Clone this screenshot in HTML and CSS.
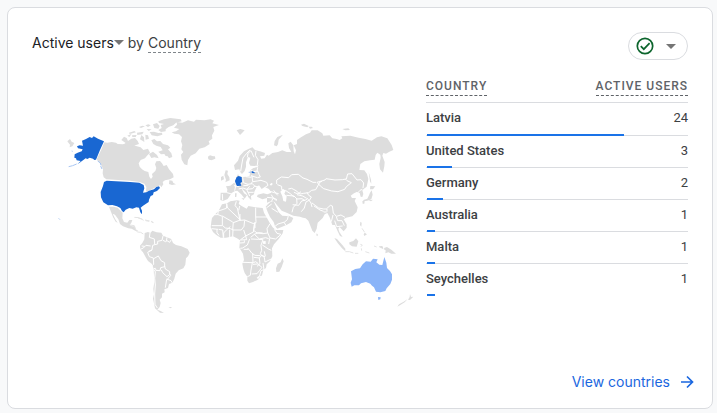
FILE: index.html
```html
<!DOCTYPE html>
<html lang="en">
<head>
<meta charset="utf-8">
<title>Active users by Country</title>
<link rel="stylesheet" href="styles.css">
</head>
<body>
<main class="card">
  <header class="card-header">
    <h1 class="title">
      <button class="metric" type="button">Active users<svg class="caret" viewBox="0 0 10 5" aria-hidden="true"><path d="M0 0h10L5 5z"/></svg></button>
      <span>by</span>
      <span class="dimension">Country</span>
    </h1>
    <button class="status" type="button" aria-label="Data quality">
      <svg class="check" viewBox="0 0 18 18" aria-hidden="true"><circle cx="9" cy="9" r="7.7"/><path d="M4.8 9.2l3 3 5.8-6"/></svg>
      <svg class="caret" viewBox="0 0 10 5" aria-hidden="true"><path d="M0 0h10L5 5z"/></svg>
    </button>
  </header>
  <div class="content">
    <svg class="map" viewBox="32 68 386 252" role="img" aria-label="World map of active users">
      <!-- North America -->
      <g transform="translate(50 110) scale(.33333)">
        <path class="land" d="M163 97L172 98 185 96 198 98 203 102 219 103 233 99 240 104 258 108 272 112 280 120 294 116 300 128 291 137 285 145 272 150 266 160 269 170 276 178 284 183 295 186 298 200 303 207 308 200 306 192 316 183 319 174 315 163 319 154 330 153 336 160 341 168 350 165 357 178 369 192 371 202 360 208 345 211 338 216 340 223 334 232 330 226 314 233 300 241 288 245 289 231 283 221 269 216 240 212 169 208 161 202 158 190 159 178 154 165 147 157 140 148 153 121z"/>
        <path class="land" d="M358 211l9 1 3 7 8 4-12 2-9-3zM52 94l8-7 5 8 8 4-6 10-8 3 1-8zM177 290l13 0 13 3 7 8 8 7-1 17 5 11 10 2 6-8 9 0-3 8-5 7 7 4 8 0 3 9 8 5-8 0-12-7-10-1-16-6-9-7-5-14-10-14-7-3 8 17 7 10-6-3-8-14z"/>
        <path class="land thin" d="M253 322l14 1 14 8M287 332l10 2M303 334l5 1"/>
        <path class="active" d="M96 92L108 87 119 81 126 84 131 79 144 86 162 94 150 120 138 149 133 150 129 146 119 143 112 147 107 145 91 157 82 163 92 153 80 151 78 145 73 143 74 133 83 128 95 124 98 118 84 115 81 109 89 106 99 107z"/>
        <path class="faint" d="M80 162l-12 5-12 3M143 153l8 6 2 7M152 168l4 9M65 123l3 1M26 325l4 4"/>
        <path class="active" d="M170 212L240 216 268 218 281 225 283 235 279 248 289 247 297 242 312 238 319 231 327 229 330 234 321 243 311 247 309 255 302 258 297 269 296 276 278 288 272 293 276 302 276 313 271 307 267 293 259 292 248 296 238 294 227 299 221 307 216 303 211 294 201 289 187 285 174 286 160 277 153 262 152 246 159 228 162 216z"/>
      </g>
      <!-- Arctic islands and Greenland -->
      <g transform="translate(120 110) scale(.33333)">
        <path class="land" d="M4 90L12 80 20 84 24 93 34 86 45 84 53 93 57 102 46 106 39 111 22 108 10 105 17 99zM94 91L103 87 111 94 121 93 129 102 144 106 151 113 144 118 154 130 157 141 147 145 143 139 137 138 133 132 123 133 115 125 128 121 122 111 109 107 100 102zM115 34L132 28 151 24 182 28 185 34 168 38 160 46 146 51 137 58 137 64 123 66 115 60 125 54 122 45 132 42 117 39zM89 66l13-1 13 4 11-1 1 6-15 5-17-3zM99 43l12-4 8 9-4 8-12-2zM27 68l16-5 5 4-19 5zM51 68l20-3-4 8-15 2zM22 77l13-6-7 10zM36 76l14-1-3 6-10 0zM64 75l8 7 1 14-13-8zM76 74l8 2 3 10-10 3zM76 46l9-3 7 3-8 5zM57 51l10-4 8 2-12 5zM80 57l15 1-9 5zM87 132l12-7 12 10 5 10-13-3-9 2z"/>
        <path class="land" d="M155 67L168 64 178 57 162 53 171 44 170 36 187 38 204 31 222 35 228 29 253 31 272 28 282 32 277 40 297 45 280 51 283 62 276 76 277 86 266 94 269 102 254 112 238 116 227 130 212 137 204 150 202 166 193 163 185 149 183 134 190 126 184 118 187 105 183 94 186 81 177 73 163 71zM264 141l7-3 5 3 9-2 1 7-12 5-9-3z"/>
      </g>
      <!-- South America -->
      <g transform="translate(120 210) scale(.33333)">
        <path class="land" d="M74 69L84 66 91 69 97 62 110 67 124 68 129 77 141 82 154 87 159 99 168 105 184 109 203 117 209 128 204 139 198 145 196 164 190 175 176 181 167 191 163 206 157 218 147 222 144 234 133 238 134 247 126 251 126 262 119 269 122 279 119 291 112 299 122 303 132 309 120 308 105 295 102 280 99 266 102 253 100 236 103 216 101 176 96 162 84 153 78 143 69 127 61 118 60 107 67 99 73 88zM145 292l11-1-4 4z"/>
        <path class="land thin" d="M29 45l14 2 4 12 5 7 10 1 8 5M55 25l12 2M75 30l14 3M95 37l6 1"/>
        <path class="border" d="M90 69l-2 13 15 5 1 17-6 2-2 14-10 4M104 104l9-2 0-8 13-3 3-13M129 91l8 4 4-3 8 5 5-8M141 82l-2 11M61 118l9-4 8-8 14 2M65 108l9 1M96 120l-13 7 5 13 12 4 1 19-4 4M101 146l14-8 8 14 11 6 0 12-12 3-2 9-12-1-2-6-4 1M134 168l2 9 13 8 0 9-8 6-13-12-4-8M149 191l3 5-12 15M140 207l13 5 4 7M140 208l-4 25M103 179l3 7-2 19 2 20-2 27 1 31 7 11"/>
      </g>
      <!-- Europe and Asia -->
      <g transform="translate(200 120) scale(.33333)">
        <path class="land" d="M165 90L180 94 195 99 193 107 180 109 184 116 194 115 201 104 206 107 217 99 234 96 247 91 260 96 274 96 267 84 265 70 272 65 280 76 281 94 285 103 288 91 281 76 291 72 291 60 303 52 318 43 330 38 335 31 353 31 367 40 370 47 389 46 397 55 410 57 419 60 427 55 424 49 451 47 476 53 496 57 515 62 531 52 544 49 562 55 575 75 580 90 568 95 558 101 550 99 547 107 554 126 553 139 549 158 540 148 538 132 542 113 541 104 532 98 527 105 524 119 510 121 493 124 481 132 478 150 493 151 501 162 505 177 500 200 492 206 487 211 490 222 487 231 482 230 479 219 470 216 462 220 452 227 456 234 468 234 464 243 473 262 470 276 457 289 438 293 431 298 440 313 440 323 431 334 425 328 419 321 415 326 418 336 428 351 420 348 413 334 405 315 397 315 389 292 382 279 374 283 368 294 353 308 350 326 344 339 337 332 325 302 317 295 309 293 300 290 280 287 260 278 245 272 229 253 224 246 212 244 201 248 201 234 187 238 171 230 173 224 190 220 202 223 214 218 207 207 194 201 185 207 177 196 170 201 163 215 162 223 153 228 154 241 145 232 139 219 124 204 132 220 141 226 134 236 125 224 112 212 105 213 95 219 83 237 69 243 61 240 62 218 81 218 82 208 78 199 91 197 104 187 108 176 114 162 119 172 138 170 149 167 151 151 160 144 173 141 176 136 163 138 151 137 147 129 151 113 144 111 138 127 138 140 134 153 126 162 121 157 118 148 105 150 102 136 114 122 119 108 132 94 145 87 157 82z"/>
        <path class="cut" d="M241 215l8-8 8 5-4 9 7 8-2 16-8-2-3-14zM209 193l7-5 2 5-5 4z"/>
        <path class="land" d="M73 165l4-14 7 1-2 10 6 10 1 9-13 6 2-8zM63 171l7-4 2 11-9 4zM110 31l11-4 13 4-10 10-4 4zM222 76l2-13 8-12 17-7-13 15-2 14-4 6zM24 110l6-4 14 4-3 7-12 2zM136 242l6 3M124 235l9 0-2 5zM105 220l5 0-1 11-4 0zM303 14l9-3 14 7-4 4-15-4zM326 20l9 0 4 4-9 2zM427 27l18-2 5 5-14 1zM506 156l3 10 4 13 1 12-4-7zM511 198l15 1-7 9-9 0zM515 211l3 13-4 14-12 4-12 2 0-4 12-4 5-10 3-8zM487 243l7 1-1 7-5 0z"/>
        <path class="border" d="M150 90l-10 10-11 14-4 21-3 19M142 112l2-12 9-8 9 20M168 93l-2 13 8 13-2 16M152 151l9 4 12-2 4 10 4 8-9 2-19-6M173 142l-2 12M156 168l2 16-5 8M128 171l2 17 14 5 13-2M159 185l13-2 11-2 17 6 4 9-9 6M138 170l16 2M157 191l8 8 11 2M165 197l-7 9-18 2-11-4-13 3M126 187l-10 13-14-3M102 184l6 10-4 18M81 218l14 4M67 222l1 19M130 197l15-1M140 208l4 9 17 0M144 216l5 12M149 199l-8 9M207 213l16 5 13 3M214 224l5 9 12 6M221 211l12 15M201 232l18 2 11 8M219 235l-5 10M230 192l0-12 14-9 22 2 9-9 20-1 14 11 12 4 18 9 9 0M232 194l13 5 0 10 11 3M265 207l10-2 13 7 12 10 11-2 15-2 9-7 12-2 13-23 6-2M256 211l15 10 11 10M259 226l23 2 9 9 15-1 9 6M290 236l1 14-11 12-4 15M278 254l18 2 9-13 12-3 7-5M282 217l12 5 9-7M291 224l17 4 12 7M321 217l5 9 8 5-5 9-11 6-5 18-9 11M325 238l8 11 3 12M336 249l20 15 15 3 10 0 0 8M342 258l18 12 11 4M380 266l11-10 6 2 3 21 9 10 14-4 12 7M380 276l-9 0M409 290l4 12 13 0 7 15M399 285l-5 20M404 302l6 18 18-2M351 187l24-7 3-4 27 4 22-1 12-2 4-15 13-1 15 19 12-1 8 10-2 15M351 187l10 11 10 8 24 7 19 2 20-7 5-8 15-12-13-6-5-5M487 208l-7 3-7 8"/>
        <path class="active" d="M110 171l6-3 9 3 1 15-5 3 3 8-13 1-3-6-3-9z"/>
        <path class="faint" d="M146 157l16-1"/>
        <path class="active" d="M155 156l1-3 5 3 4 2-1 2-8-1z"/>
      </g>
      <!-- Africa and Arabia -->
      <g transform="translate(200 190) scale(.33333)">
        <path class="land" d="M66 43L81 40 91 34 111 31 119 32 116 42 125 48 140 56 145 48 166 52 188 54 192 68 201 84 208 97 218 112 227 120 250 120 248 130 236 147 222 163 216 175 217 199 210 214 200 223 198 234 190 240 186 256 174 269 159 276 147 280 142 272 142 260 134 249 130 237 127 221 132 210 129 191 118 173 120 151 111 145 99 139 78 143 62 143 48 134 39 126 32 112 34 95 36 84 47 71 56 62zM247 205l4 9-6 17-7 14-9 1-1-11 5-14 9-4z"/>
        <path class="land" d="M197 50L202 44 212 35 222 36 230 54 236 67 247 77 259 78 266 77 280 84 274 97 261 104 232 116 225 109 221 96 210 81 203 66z"/>
        <path class="cut" d="M170 263l6-5 3 5-5 4zM188 154l9-1 0 9-8-1z"/>
        <path class="border" d="M81 41l-2 14-24 8-2 11-20 0M52 73l15 6 0 28-32 0M67 78l31 18M79 40l4 14 38 36-21 8M109 34l-4 13 7 7 8 36M120 72l0 19 14-1 29 12 0-4M119 48l-3 13M167 53l0 28 1 13 0 4-4 2-4 26M168 81l34 0M165 96l0 18M134 91l-2 18-8 11-26 0 2-24M98 119l-7-3-15-2-8-7M91 110l-12 10-8 9 0 14M89 119l0 22M99 119l-1 21M56 118l12 2 2 23M35 116l19 2M51 118l0 10 6 8M131 120l6 18-15 11M160 126l-23 12 3 11-20 1M163 105l-2 16 10 8 18 2 14-2-2-13 9-15M203 128l7 16 17 3 16-14-12-3-8-12M188 129l-13-1-12 5-11 9M163 133l15 14 19-4 9 3M153 147l23 1 13 1M149 147l-7 18-14 9-7 1M120 159l13-1 0-7M189 149l-6 17 2 15-4 10 4 7M187 165l18 12 9 4M209 145l-3 17M143 174l13 16 9 6 16 1M131 178l14 0M129 217l31 1 7-3 8 6M158 190l1 27M161 202l17 2 7-8 10 4M184 195l9 7 2 14 19-9M196 199l-3-15M178 204l2 17-9 8M157 218l-4 22-2 16-9 4M159 223l14-1 13 10-7 9-8 10-16 1M189 219l3 20-9 3-5 18 6-1M199 54l16-12M215 55l19 12M225 109l9-7 20-6 8-7 3-12M252 97l6 9"/>
      </g>
      <!-- Southeast Asia and Oceania -->
      <g transform="translate(300 200) scale(.33333)">
        <path class="land" d="M103 114l8 3 16 18 9 11 0 8-10-9-13-16zM148 127l12-4 8-8 7 9-5 16-14-1-8-6zM237 139l10-1 3 7 11-4 13 8 14 12-14 0-9-4-9 3 1-9-19-9zM50 100l4 4-2 5-3-3zM181 65l4 3-1 12-4-5zM194 98l7 5-8 5-2-5zM330 282l3 9 7-1-10 10-6-1 5-8zM323 297l-9 10-13 8-9 5 5-7 14-8zM205 1l14-2-6 5z"/>
        <path class="land thin" d="M136 155l12 0 12 4M165 160l10 0M181 133l6 2-4 5M184 145l1 7M196 155l12 4M186 85l8 12M222 138l8 3"/>
        <path class="border" d="M251 138l0 26"/>
        <path class="oceania" d="M153 214L166 207 180 205 188 193 198 184 212 185 219 176 233 178 229 187 238 194 247 195 250 183 253 171 259 188 261 204 270 213 276 223 276 239 271 252 260 265 256 273 241 277 228 275 222 262 216 257 211 251 198 246 183 250 177 256 163 256 155 260 152 248 156 238z"/>
        <path class="oceania" d="M234 291l8 1-1 6-6 2z"/>
      </g>
    </svg>
    <table class="table">
      <thead>
        <tr><th scope="col"><span>Country</span></th><th scope="col"><span>Active users</span></th></tr>
      </thead>
      <tbody>
        <tr><td>Latvia<i class="bar" style="width:75%"></i></td><td>24</td></tr>
        <tr><td>United States<i class="bar" style="width:9.375%"></i></td><td>3</td></tr>
        <tr><td>Germany<i class="bar" style="width:6.25%"></i></td><td>2</td></tr>
        <tr><td>Australia<i class="bar" style="width:3.125%"></i></td><td>1</td></tr>
        <tr><td>Malta<i class="bar" style="width:3.125%"></i></td><td>1</td></tr>
        <tr><td>Seychelles<i class="bar" style="width:3.125%"></i></td><td>1</td></tr>
      </tbody>
    </table>
  </div>
  <footer class="card-footer">
    <a class="more" href="#countries">View countries <svg class="arrow" viewBox="0 0 14 14" aria-hidden="true"><path d="M1 7h11M7 1.500l5.500 5.500L7 12.500"/></svg></a>
  </footer>
</main>
</body>
</html>
```
FILE: styles.css
```css
* { box-sizing: border-box; }
body {
  margin: 0;
  min-height: 100vh;
  padding: 7px 4px 4px 7px;
  display: flex;
  background: #f8f9fa;
  color: #3c4043;
  font-family: Roboto, "Liberation Sans", sans-serif;
}
button { font: inherit; color: inherit; background: none; border: 0; padding: 0; cursor: pointer; }
.card {
  flex: 1;
  display: flex;
  flex-direction: column;
  padding: 24px;
  background: #fff;
  border: 1px solid #dadce0;
  border-radius: 8px;
}
.card-header { display: flex; justify-content: space-between; align-items: center; }
.title {
  display: flex;
  gap: 4px;
  margin: 0;
  padding-bottom: 7px;
  font: 400 14px/20px Inter, sans-serif;
}
.metric { display: flex; align-items: center; color: #202124; }
.caret { width: 10px; height: 5px; fill: #757575; }
.dimension { border-bottom: 1px dashed #80868b; line-height: 19px; }
.status {
  display: flex;
  align-items: center;
  justify-content: space-between;
  width: 60px;
  height: 28px;
  padding: 0 11px 0 7px;
  border: 1px solid #dadce0;
  border-radius: 14px;
}
.check { width: 18px; height: 18px; fill: none; stroke: #0d652d; stroke-width: 1.7; }
.content {
  display: grid;
  grid-template-columns: minmax(0, 1fr) minmax(0, 262px);
  gap: 8px;
  align-items: start;
  padding-top: 8px;
}
.map { width: 100%; height: auto; display: block; }
.land { fill: #ddd; }
.thin { fill: none; stroke: #e4e4e4; stroke-width: 3; }
.border { fill: none; stroke: #fff; stroke-width: 3; stroke-linejoin: round; }
.cut { fill: #fff; }
.active { fill: #1967d2; }
.faint { fill: none; stroke: #a9c6f2; stroke-width: 3; }
.oceania { fill: #8ab4f8; }
.table { width: 100%; border-collapse: separate; border-spacing: 0; font-size: 13px; line-height: 16px; }
.table th {
  height: 35px;
  padding: 0 0 6px;
  vertical-align: bottom;
  border-bottom: 1px solid #dadce0;
  color: #5f6368;
  font-size: 12px;
  font-weight: 500;
  letter-spacing: 1px;
  text-transform: uppercase;
  text-align: left;
}
.table th span { display: inline-block; line-height: 17px; border-bottom: 1px dashed #5f6368; }
.table tr > :last-child { text-align: right; }
.table tbody tr { position: relative; }
.table td { height: 32px; padding: 0 0 2px; border-bottom: 1px solid #dadce0; }
.table tbody tr:first-child td { height: 33px; }
.table td:first-child { font-weight: 500; }
.table tbody tr:last-child td { border-bottom-color: transparent; }
.bar { position: absolute; left: 1px; bottom: 0; height: 2px; background: #1a73e8; }
.card-footer { margin-top: auto; margin-right: -6px; margin-bottom: -8px; text-align: right; }
.more {
  display: inline-flex;
  align-items: center;
  gap: 10px;
  color: #1a67e0;
  font: 400 14px/20px Inter, sans-serif;
  text-decoration: none;
}
.arrow { width: 14px; height: 14px; fill: none; stroke: #1a67e0; stroke-width: 1.7; }
```
